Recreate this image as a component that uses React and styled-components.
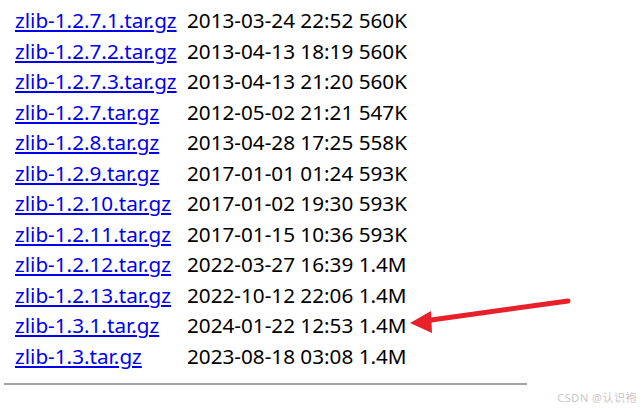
import React from "react";
import styled, { createGlobalStyle } from "styled-components";

const files = [
    { name: "zlib-1.2.7.1.tar.gz", date: "2013-03-24 22:52", size: "560K" },
    { name: "zlib-1.2.7.2.tar.gz", date: "2013-04-13 18:19", size: "560K" },
    { name: "zlib-1.2.7.3.tar.gz", date: "2013-04-13 21:20", size: "560K" },
    { name: "zlib-1.2.7.tar.gz", date: "2012-05-02 21:21", size: "547K" },
    { name: "zlib-1.2.8.tar.gz", date: "2013-04-28 17:25", size: "558K" },
    { name: "zlib-1.2.9.tar.gz", date: "2017-01-01 01:24", size: "593K" },
    { name: "zlib-1.2.10.tar.gz", date: "2017-01-02 19:30", size: "593K" },
    { name: "zlib-1.2.11.tar.gz", date: "2017-01-15 10:36", size: "593K" },
    { name: "zlib-1.2.12.tar.gz", date: "2022-03-27 16:39", size: "1.4M" },
    { name: "zlib-1.2.13.tar.gz", date: "2022-10-12 22:06", size: "1.4M" },
    { name: "zlib-1.3.1.tar.gz", date: "2024-01-22 12:53", size: "1.4M" },
    { name: "zlib-1.3.tar.gz", date: "2023-08-18 03:08", size: "1.4M" },
];

const GlobalStyle = createGlobalStyle`
    html, body {
        margin: 0;
        padding: 0;
        background: #fff;
        overflow: hidden;
    }
`;

const Page = styled.div`
    position: relative;
    width: 643px;
    height: 408px;
    overflow: hidden;
    font-family: "Noto Sans", "Noto Sans CJK SC", sans-serif;
`;

const Listing = styled.div`
    padding-top: 5px;
    padding-left: 4px;
`;

const Row = styled.div`
    display: grid;
    grid-template-columns: 11px 172px 240px;
    height: 30.5px;
    align-items: center;
    font-size: 20.7px;
    color: #000;
`;

const Name = styled.a`
    grid-column: 2;
    color: #0000ee;
    text-decoration: underline;
    text-underline-offset: 2px;
    white-space: nowrap;
`;

const Info = styled.span`
    white-space: nowrap;
`;

const Rule = styled.div`
    width: 523px;
    height: 2px;
    margin-top: 12px;
    background: #a3a3a3;
`;

const Watermark = styled.span`
    position: absolute;
    right: 6px;
    bottom: 3px;
    font-size: 11px;
    color: #c8c8c8;
    letter-spacing: 0.5px;
`;

const Arrow = styled.svg`
    position: absolute;
    left: 0;
    top: 0;
    pointer-events: none;
`;

export default function App() {
    return (
        <Page>
            <GlobalStyle />
            <Listing>
                {files.map((f) => (
                    <Row key={f.name}>
                        <Name href="#">{f.name}</Name>
                        <Info>
                            {f.date} {f.size}
                        </Info>
                    </Row>
                ))}
                <Rule />
            </Listing>
            <Arrow width="643" height="408" viewBox="0 0 643 408">
                <line x1="568" y1="301" x2="424" y2="321" stroke="#e8202a" strokeWidth="5" strokeLinecap="round" />
                <polygon points="410,323 431,311 432,333" fill="#e8202a" />
            </Arrow>
            <Watermark>CSDN @认识袍</Watermark>
        </Page>
    );
}
